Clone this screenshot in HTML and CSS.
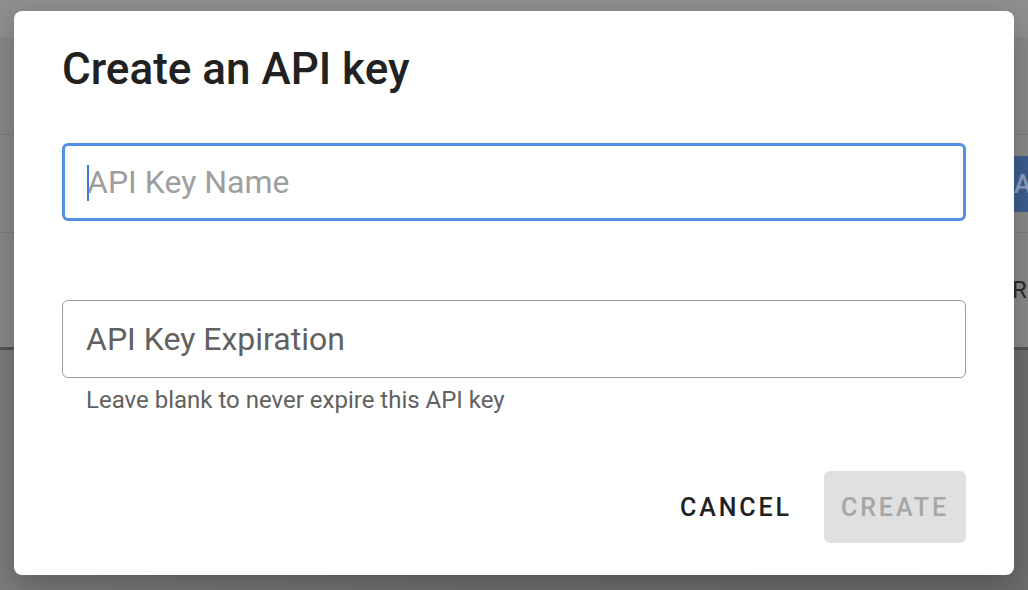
FILE: index.html
```html
<!DOCTYPE html>
<html lang="en">
<head>
<meta charset="utf-8">
<title>Create an API key</title>
<link rel="stylesheet" href="styles.css">
</head>
<body>
<div class="page">
  <div class="bg-top"></div>
  <div class="bg-row bg-row1"></div>
  <div class="bg-row bg-row2"><span class="bg-btn">AD</span></div>
  <div class="bg-row bg-row3"><span class="bg-text">R</span></div>
  <div class="bg-bottom"></div>
</div>
<div class="overlay">
  <div class="dialog">
    <h1 class="title">Create an API key</h1>
    <div class="field focused">
      <span class="caret"></span>
      <span class="placeholder light">API Key Name</span>
    </div>
    <div class="field plain">
      <span class="placeholder">API Key Expiration</span>
    </div>
    <p class="helper">Leave blank to never expire this API key</p>
    <div class="actions">
      <button class="btn cancel">CANCEL</button>
      <button class="btn create" disabled>CREATE</button>
    </div>
  </div>
</div>
</body>
</html>
```
FILE: styles.css
```css
* { box-sizing: border-box; }
html, body { margin: 0; padding: 0; }
body {
  width: 1028px;
  height: 590px;
  overflow: hidden;
  font-family: Roboto, "Liberation Sans", sans-serif;
  position: relative;
  background: #747474;
}
.page {
  display: flex;
  flex-direction: column;
  height: 590px;
}
.bg-top {
  height: 39px;
  background: #8f8f8f;
  border-bottom: 1px solid #858585;
}
.bg-row {
  background: #898989;
  border-bottom: 1px solid #7d7d7d;
  position: relative;
}
.bg-row1 { height: 96px; }
.bg-row2 { height: 98px; display: flex; justify-content: flex-end; align-items: flex-start; }
.bg-row3 { height: 117px; border-bottom: 3px solid #555; display: flex; justify-content: flex-end; align-items: center; }
.bg-btn {
  margin-top: 21px;
  width: 60px;
  height: 56px;
  background: #3e5e8f;
  color: #8ea1c0;
  font-size: 26px;
  font-weight: 500;
  padding: 13px 0 0 0;
  margin-right: -46px;
}
.bg-text {
  color: #2a2a2a;
  font-size: 24px;
  margin-right: -6px;
  width: 22px;
}
.bg-bottom {
  flex: 1;
  background: linear-gradient(90deg, #7c7c7c, #707070 50%, #6d6d6d);
}
.overlay {
  position: absolute;
  inset: 0;
  padding: 11px 14px 15px 14px;
}
.dialog {
  background: #fff;
  border-radius: 8px;
  width: 1000px;
  height: 564px;
  padding: 32px 48px 0 48px;
  box-shadow: 0 10px 30px rgba(0,0,0,0.25);
  display: flex;
  flex-direction: column;
}
.title {
  margin: 0;
  font-size: 44px;
  font-weight: 500;
  color: #212121;
  line-height: 52px;
  letter-spacing: 0;
}
.field {
  height: 78px;
  border-radius: 6px;
  display: flex;
  align-items: center;
  position: relative;
}
.focused {
  margin-top: 48px;
  border: 3px solid #538ee7;
  padding-left: 22px;
}
.plain {
  margin-top: 79px;
  border: 1.5px solid #9e9e9e;
  padding-left: 23px;
}
.placeholder {
  font-size: 32px;
  color: #616161;
}
.placeholder.light { color: #9e9e9e; }
.caret {
  position: absolute;
  left: 22px;
  top: 19px;
  width: 2px;
  height: 36px;
  background: #3f77d9;
}
.helper {
  margin: 6px 0 0 24px;
  font-size: 24px;
  color: #616161;
  line-height: 32px;
}
.actions {
  margin-top: 55px;
  display: flex;
  justify-content: flex-end;
  align-items: center;
  gap: 12px;
}
.btn {
  font-family: Roboto, "Liberation Sans", sans-serif;
  font-size: 25px;
  font-weight: 500;
  letter-spacing: 2.9px;
  border: none;
  border-radius: 6px;
  height: 72px;
  padding: 0 20px;
  background: transparent;
}
.cancel { color: #212121; }
.create {
  background: #e0e0e0;
  color: #a6a6a6;
  width: 142px;
  padding: 0;
}
```
